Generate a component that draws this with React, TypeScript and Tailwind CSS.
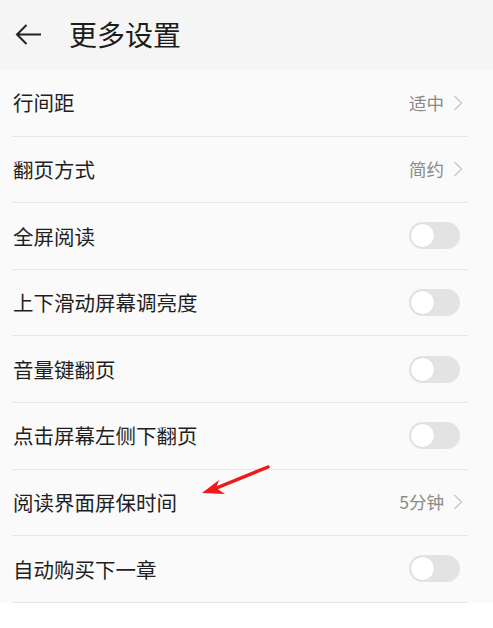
import { useState } from 'react';

type Row = {
  label: string;
  value?: string;
  toggle?: boolean;
};

const rows: Row[] = [
  { label: '行间距', value: '适中' },
  { label: '翻页方式', value: '简约' },
  { label: '全屏阅读', toggle: true },
  { label: '上下滑动屏幕调亮度', toggle: true },
  { label: '音量键翻页', toggle: true },
  { label: '点击屏幕左侧下翻页', toggle: true },
  { label: '阅读界面屏保时间', value: '5分钟' },
  { label: '自动购买下一章', toggle: true },
];

function Toggle() {
  const [on, setOn] = useState(false);
  return (
    <button
      onClick={() => setOn(!on)}
      className={`flex h-[27px] w-[51px] items-center rounded-full p-[1px] ${
        on ? 'justify-end bg-[#007dff]' : 'justify-start bg-[#e3e3e3]'
      }`}
    >
      <span className="h-[25px] w-[25px] rounded-full border border-[#dcdcdc] bg-white" />
    </button>
  );
}

function Chevron() {
  return (
    <svg width="10" height="16" viewBox="0 0 10 16" fill="none" className="ml-[9px]">
      <path d="M1.5 1 L8.5 8 L1.5 15" stroke="#c6c6c6" strokeWidth="1.3" />
    </svg>
  );
}

export default function App() {
  return (
    <div
      className="min-h-screen w-full bg-white"
      style={{ fontFamily: '"Noto Sans CJK SC", "Noto Sans", sans-serif' }}
    >
      <header className="flex h-[70px] items-center bg-[#f5f5f5] pb-[2px]">
        <svg width="27" height="21" viewBox="0 0 27 21" fill="none" className="ml-[15px]">
          <path d="M26 10.5 H2.5 M11.5 1 L2 10.5 L11.5 20" stroke="#222" strokeWidth="2" />
        </svg>
        <h1 className="ml-[27px] text-[28px] leading-none text-[#1c1c1c]">更多设置</h1>
      </header>

      <div className="relative bg-[#fafafa]">
        {rows.map((row) => (
          <div key={row.label} className="pl-[12px] pr-[25px]">
            <div className="flex h-[66.6px] items-center border-b border-[#e6e6e6]">
              <span className="pl-[1px] text-[20.5px] text-[#1f1f1f]">{row.label}</span>
              <div className="ml-auto flex items-center pr-[5px]">
                {row.toggle ? (
                  <div className="pr-[3px]">
                    <Toggle />
                  </div>
                ) : (
                  <>
                    <span className="text-[17.5px] text-[#8a8a8a]">{row.value}</span>
                    <Chevron />
                  </>
                )}
              </div>
            </div>
          </div>
        ))}

        {/* red pointer drawn over the list */}
        <svg
          width="80"
          height="40"
          viewBox="0 0 80 40"
          className="pointer-events-none absolute left-[198px] top-[392px]"
        >
          <path d="M70 5 L16 27" stroke="#f01818" strokeWidth="3.5" strokeLinecap="round" />
          <path d="M4 31 L21 18 L18 26 L27 32 Z" fill="#f01818" />
        </svg>
      </div>
    </div>
  );
}
